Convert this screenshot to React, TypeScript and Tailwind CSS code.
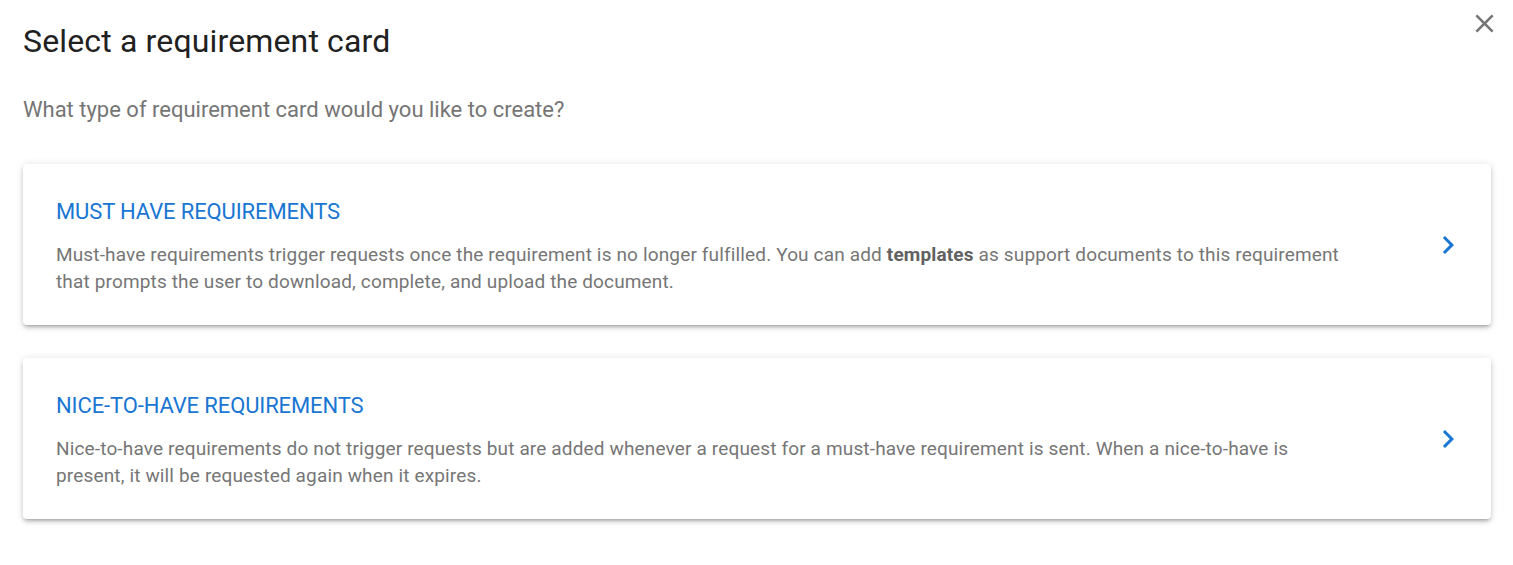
const font = { fontFamily: "Roboto, 'Liberation Sans', sans-serif" };

function ChevronRight() {
  return (
    <svg viewBox="0 0 24 24" className="h-[36px] w-[36px] fill-[#1976d2]">
      <path d="M10 6 8.59 7.41 13.17 12l-4.58 4.59L10 18l6-6z" />
    </svg>
  );
}

function CloseIcon() {
  return (
    <svg viewBox="0 0 24 24" className="h-[31px] w-[31px] fill-[#757575]">
      <path d="M19 6.41 17.59 5 12 10.59 6.41 5 5 6.41 10.59 12 5 17.59 6.41 19 12 13.41 17.59 19 19 17.59 13.41 12z" />
    </svg>
  );
}

type CardProps = { title: string; children: React.ReactNode };

function RequirementCard({ title, children }: CardProps) {
  return (
    <button className="flex w-full items-center rounded-[4px] bg-white pl-[33px] pr-[25px] text-left shadow-[0px_3px_3px_-2px_rgba(0,0,0,0.2),0px_3px_4px_0px_rgba(0,0,0,0.14),0px_1px_8px_0px_rgba(0,0,0,0.12)]">
      <div className="mr-[85px] flex-1 pt-[32px] pb-[30px]">
        <div className="text-[22px] leading-[32px] tracking-[-0.12px] text-[#1976d2]">{title}</div>
        <p className="mt-[13px] text-[19px] leading-[27px] tracking-[0.15px] text-[#767676]">{children}</p>
      </div>
      <ChevronRight />
    </button>
  );
}

export default function App() {
  return (
    <div className="relative min-h-[565px] bg-white px-[23px] pr-[22px]" style={font}>
      <button className="absolute right-[13px] top-[8px]">
        <CloseIcon />
      </button>
      <h1 className="pt-[21px] text-[32px] leading-[40px] tracking-[0.15px] text-[#212121]">Select a requirement card</h1>
      <p className="mt-[34px] text-[22px] leading-[30px] text-[#757575]">
        What type of requirement card would you like to create?
      </p>
      <div className="mt-[39px] flex flex-col gap-[33px]">
        <RequirementCard title="MUST HAVE REQUIREMENTS">
          Must-have requirements trigger requests once the requirement is no longer fulfilled. You can add{" "}
          <b className="font-bold text-[#616161]">templates</b> as support documents to this requirement that prompts the
          user to download, complete, and upload the document.
        </RequirementCard>
        <RequirementCard title="NICE-TO-HAVE REQUIREMENTS">
          Nice-to-have requirements do not trigger requests but are added whenever a request for a must-have requirement
          is sent. When a nice-to-have is present, it will be requested again when it expires.
        </RequirementCard>
      </div>
    </div>
  );
}
